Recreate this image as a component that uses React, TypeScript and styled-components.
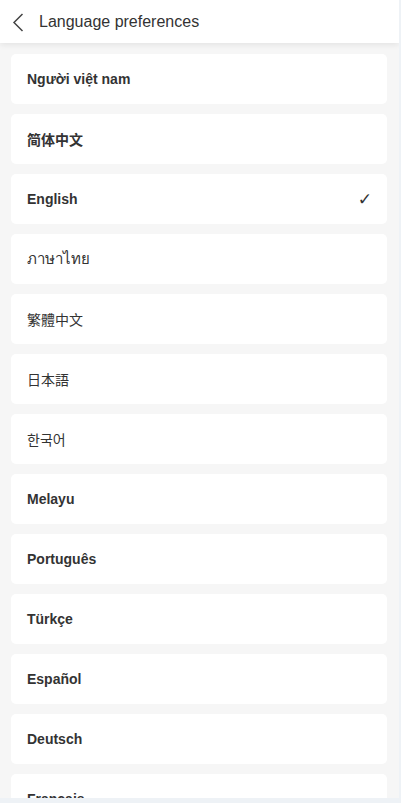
import React, { useState } from "react";
import styled, { createGlobalStyle } from "styled-components";

const GlobalStyle = createGlobalStyle`
    html, body {
        margin: 0;
        padding: 0;
        background: #eef2f6;
    }
    #root {
        width: 399px;
        height: 798px;
        overflow: hidden;
    }
`;

const Page = styled.div`
    width: 399px;
    height: 798px;
    background: #f6f6f6;
    display: flex;
    flex-direction: column;
    overflow: hidden;
    font-family: "Liberation Sans", Arial, "Noto Sans CJK SC", sans-serif;
`;

const Header = styled.div`
    height: 43px;
    flex-shrink: 0;
    background: #fff;
    display: flex;
    align-items: center;
    padding-left: 10px;
    box-shadow: 0 2px 6px rgba(0, 0, 0, 0.08);
    position: relative;
    z-index: 1;
`;

const BackBtn = styled.div`
    width: 16px;
    height: 22px;
    display: flex;
    align-items: center;
    justify-content: center;
    margin-right: 13px;
    padding-top: 2px;
    cursor: pointer;
`;

const Title = styled.div`
    color: #333;
    font-size: 16px;
`;

const List = styled.div`
    display: flex;
    flex-direction: column;
    gap: 10px;
    padding: 11px 12px 0 11px;
`;

const Item = styled.div<{ $bold: boolean; $cjk?: string; $size?: number }>`
    height: 50px;
    flex-shrink: 0;
    background: #fff;
    border-radius: 5px;
    display: flex;
    align-items: center;
    justify-content: space-between;
    padding: 0 16px;
    color: #333;
    font-size: ${(p) => p.$size || 14}px;
    font-weight: ${(p) => (p.$bold ? 700 : 400)};
    font-family: "Liberation Sans", Arial, ${(p) => p.$cjk || `"Noto Sans CJK SC"`}, sans-serif;
    cursor: pointer;
`;

const Check = styled.span`
    font-size: 17px;
    font-weight: 400;
    color: #333;
    font-family: "DejaVu Sans", sans-serif;
    margin-right: -1px;
`;

const languages = [
    { code: "vi", label: "Người việt nam", bold: true },
    { code: "zh-CN", label: "简体中文", bold: true, cjk: `"Noto Sans CJK SC"` },
    { code: "en", label: "English", bold: true },
    { code: "th", label: "ภาษาไทย", bold: false, size: 15 },
    { code: "zh-TW", label: "繁體中文", bold: false, cjk: `"Noto Sans CJK TC"` },
    { code: "ja", label: "日本語", bold: false, cjk: `"Noto Sans CJK JP"` },
    { code: "ko", label: "한국어", bold: false, cjk: `"Noto Sans CJK KR"` },
    { code: "ms", label: "Melayu", bold: true },
    { code: "pt", label: "Português", bold: true },
    { code: "tr", label: "Türkçe", bold: true },
    { code: "es", label: "Español", bold: true },
    { code: "de", label: "Deutsch", bold: true },
    { code: "fr", label: "Français", bold: true },
];

const App = () => {
    const [selected, setSelected] = useState("en");

    return (
        <>
            <GlobalStyle />
            <Page>
                <Header>
                    <BackBtn>
                        <svg width="12" height="19" viewBox="0 0 12 19" fill="none">
                            <path d="M10.5 1 L2 9.5 L10.5 18" stroke="#444" strokeWidth="1.5" />
                        </svg>
                    </BackBtn>
                    <Title>Language preferences</Title>
                </Header>
                <List>
                    {languages.map((lang) => (
                        <Item
                            key={lang.code}
                            $bold={lang.bold}
                            $cjk={lang.cjk}
                            $size={lang.size}
                            onClick={() => setSelected(lang.code)}
                        >
                            {lang.label}
                            {selected === lang.code && <Check>✓</Check>}
                        </Item>
                    ))}
                </List>
            </Page>
        </>
    );
};

export default App;
